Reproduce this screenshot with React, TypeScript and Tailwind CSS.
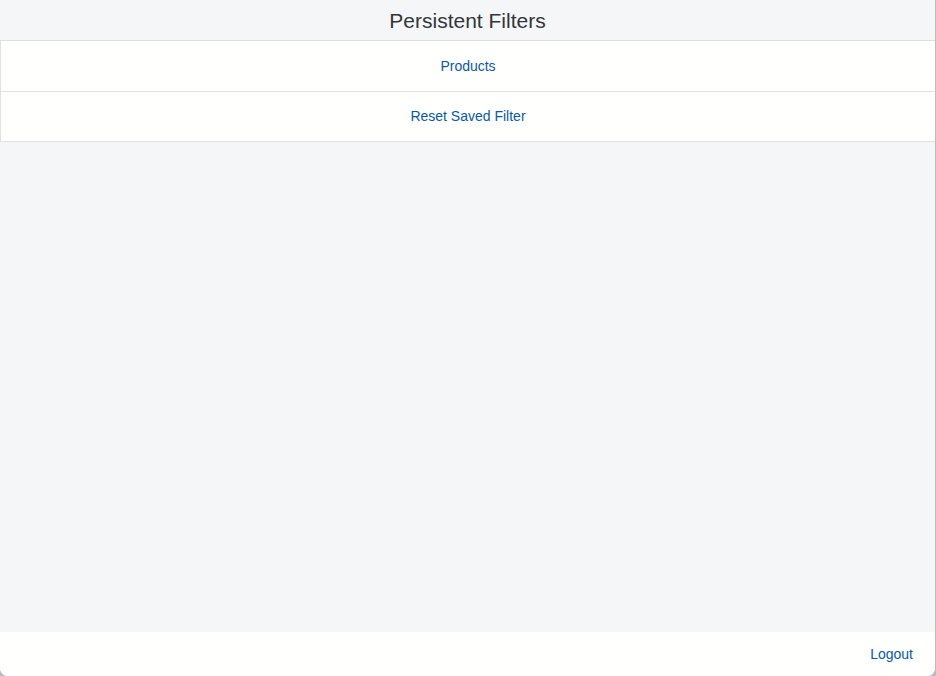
export default function App() {
  return (
    <div className="w-[936px] h-[676px] bg-[#b9bdc1] font-['Liberation_Sans',Arial,sans-serif]">
      <div className="w-[935px] h-[676px] flex flex-col bg-[#f5f6f7] rounded-b-lg overflow-hidden">
        <header className="h-[41px] shrink-0 flex items-center justify-center border-b border-[#dedede] bg-[#f5f6f7]">
          <h1 className="text-[21px] text-[#32363a] leading-none">Persistent Filters</h1>
        </header>
        <nav className="flex flex-col">
          <button className="h-[51px] bg-[#fffffd] border-l border-b border-[#e2e2e2] text-[14px] text-[#0a58a4] flex items-center justify-center">
            Products
          </button>
          <button className="h-[50px] bg-[#fffffd] border-l border-b border-[#e2e2e2] text-[14px] text-[#0a58a4] flex items-center justify-center">
            Reset Saved Filter
          </button>
        </nav>
        <main className="flex-1 bg-[#f5f6f7]" />
        <footer className="h-[44px] shrink-0 bg-[#fffffd] flex items-center justify-end pr-[22px] pt-[1px]">
          <a href="#" className="text-[14px] text-[#0a58a4]">Logout</a>
        </footer>
      </div>
    </div>
  );
}
